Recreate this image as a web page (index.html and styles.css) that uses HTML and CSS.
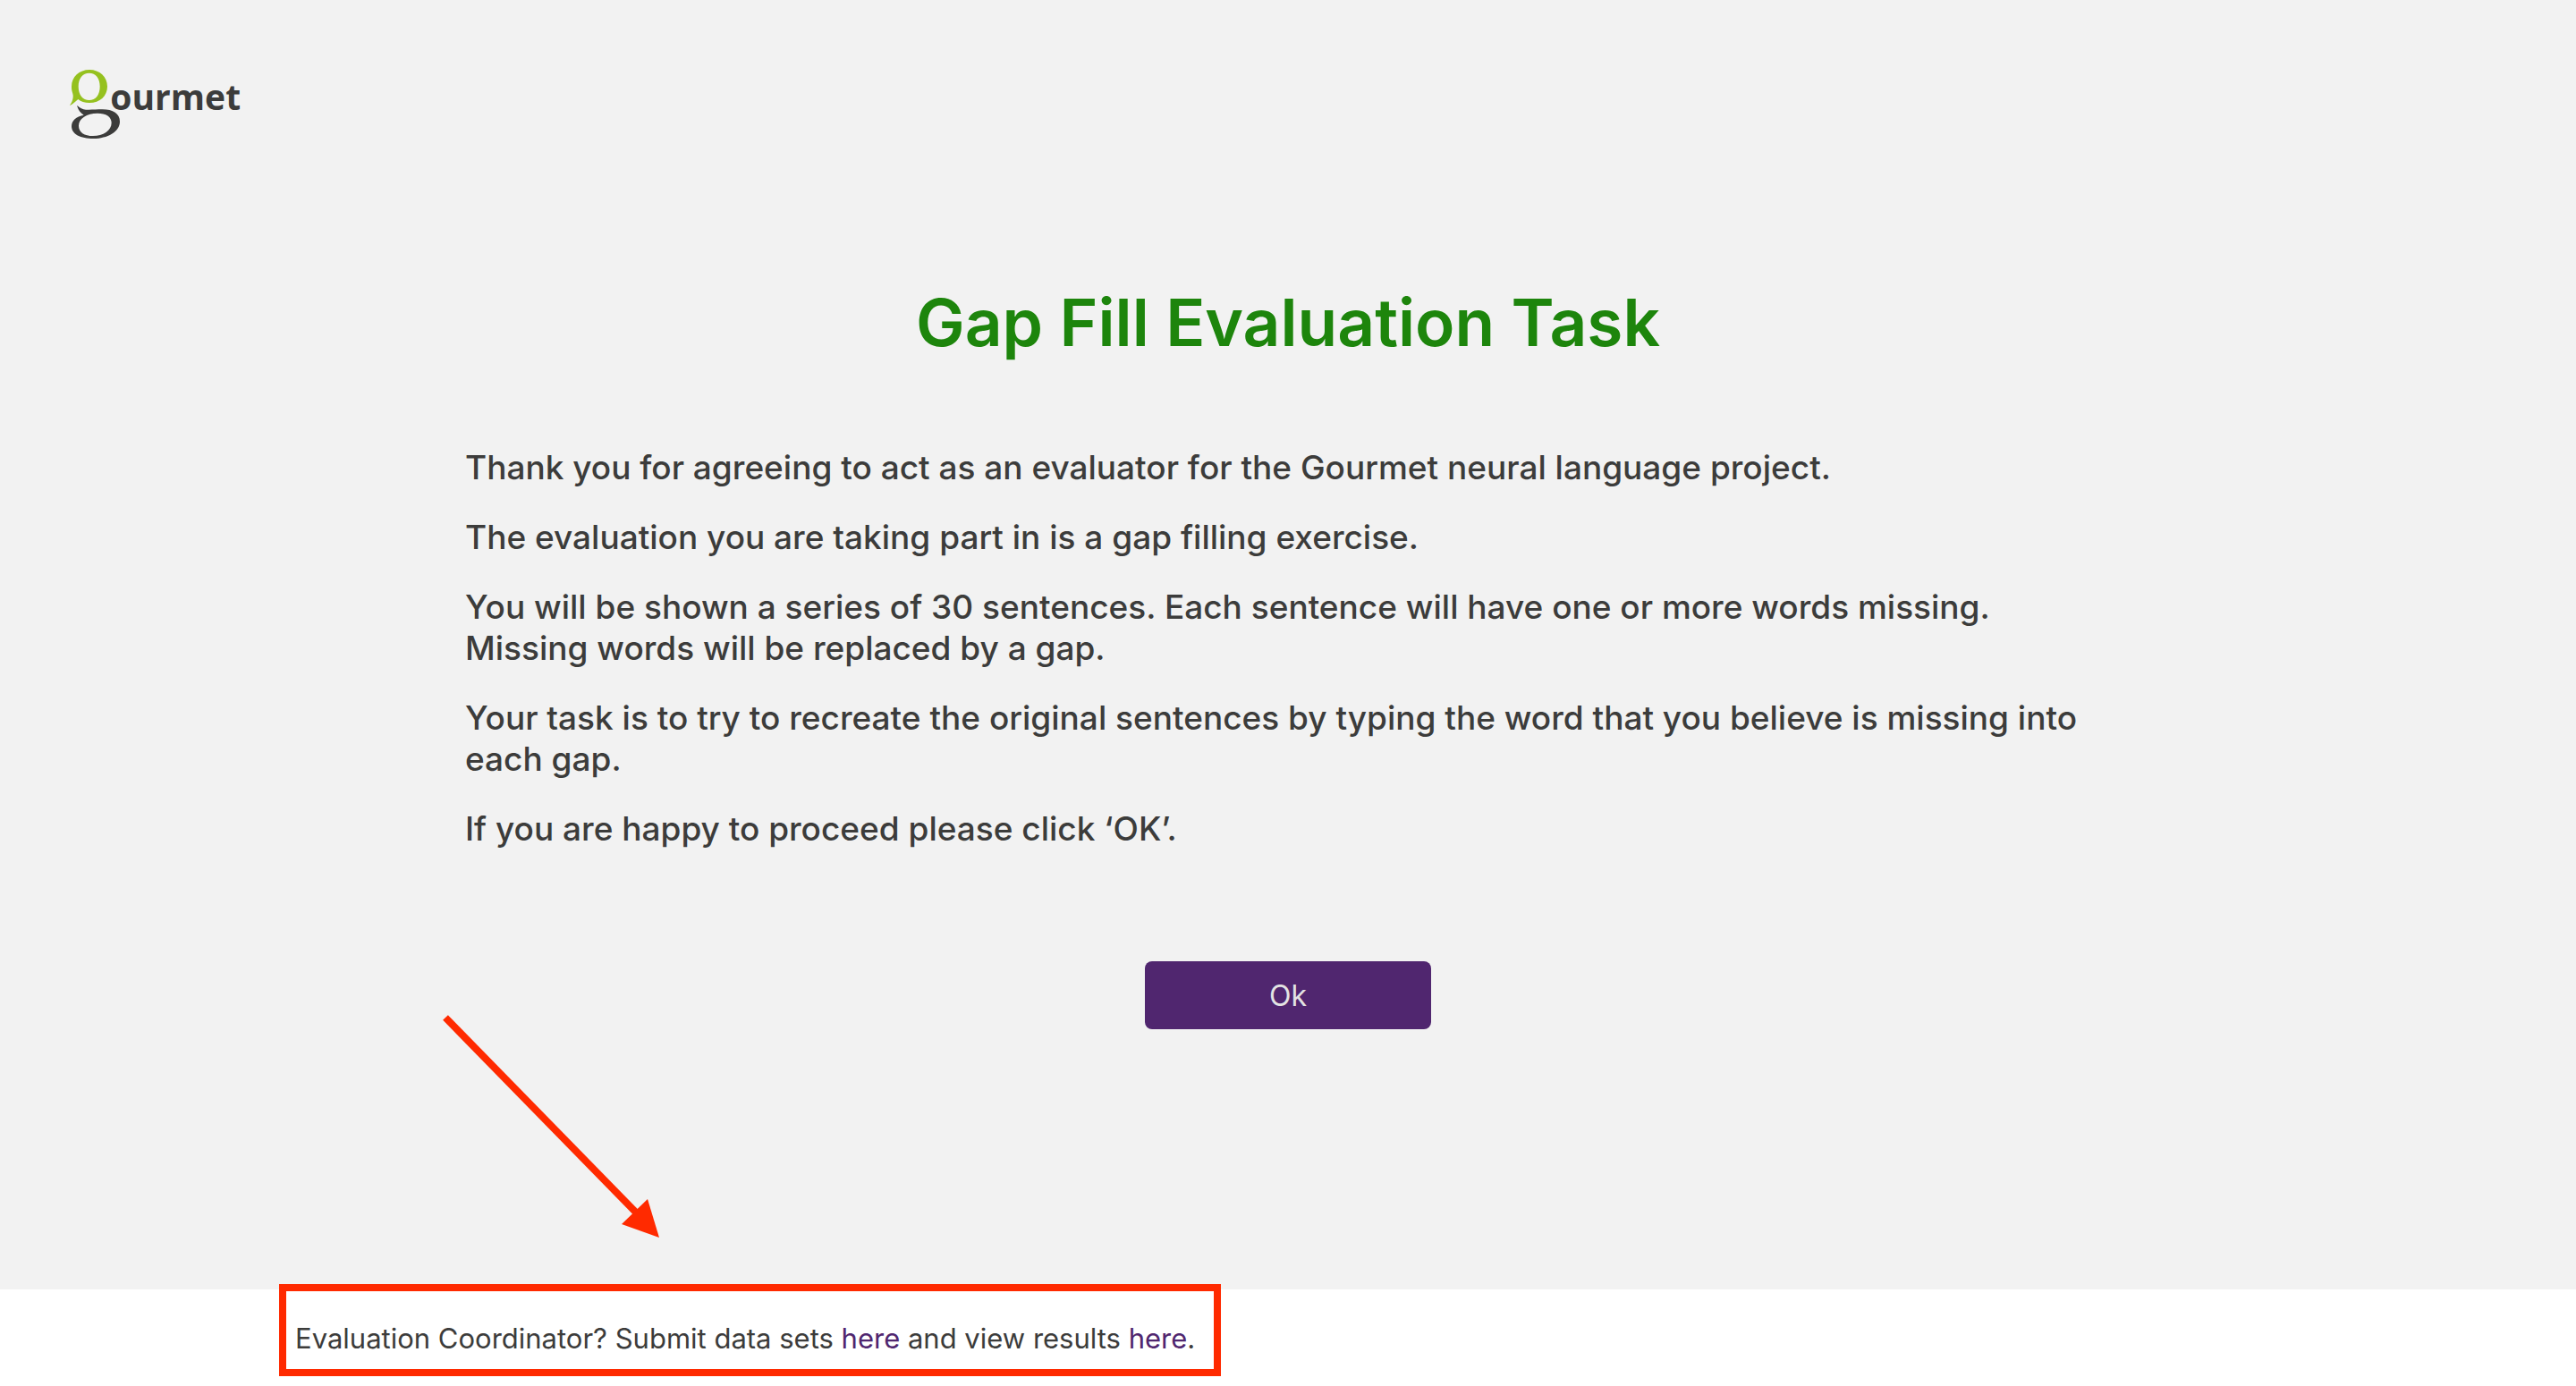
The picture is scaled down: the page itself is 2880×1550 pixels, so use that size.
FILE: index.html
```html
<!DOCTYPE html>
<html lang="en">
<head>
<meta charset="utf-8">
<meta name="viewport" content="width=device-width, initial-scale=1">
<title>Gap Fill Evaluation Task</title>
<link rel="stylesheet" href="styles.css">
</head>
<body>
<div class="page">
  <header class="header">
    <svg class="logo" viewBox="54 54 576 234" role="img" aria-label="gourmet">
      <path class="logo-bubble" fill-rule="evenodd" d="M120 54C154 54 180 78 180 110C180 142 155 165 120 165C104 165 91 161 82 153C74 160 66 168 56 173C54 173 54 172 56 170C61 163 64 155 65 146C66 138 63 132 61 124C60 119 60 115 60 110C60 78 86 54 120 54ZM119 65C98 65 83 82 83 110C83 138 98 156 119 156C141 156 155 138 155 110C155 82 141 65 119 65Z"/>
      <path class="logo-ink" fill-rule="evenodd" d="M80 175C88 183 97 187 108 188C124 189 144 187 163 187C199 187 222 201 222 228C222 262 180 285 134 285C90 285 60 270 60 243C60 225 75 211 101 206C90 199 84 191 79 177C78 174 79 174 80 175ZM147 200C111 200 84 217 84 242C84 264 103 276 132 276C166 276 194 259 194 232C194 212 176 200 147 200Z"/>
      <text class="logo-text" x="190" y="188">ourmet</text>
    </svg>
  </header>
  <main class="main">
    <h1 class="title">Gap Fill Evaluation Task</h1>
    <div class="intro">
      <p>Thank you for agreeing to act as an evaluator for the Gourmet neural language project.</p>
      <p>The evaluation you are taking part in is a gap filling exercise.</p>
      <p>You will be shown a series of 30 sentences. Each sentence will have one or more words missing. Missing words will be replaced by a gap.</p>
      <p>Your task is to try to recreate the original sentences by typing the word that you believe is missing into each gap.</p>
      <p>If you are happy to proceed please click ‘OK’.</p>
    </div>
    <button class="ok" type="button">Ok</button>
  </main>
</div>
<footer class="footer">
  <p class="note">Evaluation Coordinator? Submit data sets <a href="#submit">here</a> and view results <a href="#results">here</a>.</p>
  <svg class="arrow" viewBox="0 0 244 250" aria-hidden="true">
    <path d="M3 3L222 227" stroke="#ff2a00" stroke-width="8"/>
    <path d="M242 249L200 234L229 206Z" fill="#ff2a00"/>
  </svg>
</footer>
</body>
</html>
```
FILE: styles.css
```css
* {
  box-sizing: border-box;
}

body {
  margin: 0;
  background: #ffffff;
  color: #3c3c3b;
  font-family: Inter, "Liberation Sans", sans-serif;
}

.page {
  background: #f2f2f2;
  padding-bottom: 291px;
}

.header {
  padding: 78px 78px 0;
}

.logo {
  display: block;
  width: 192px;
  height: 78px;
  overflow: visible;
}

.logo-bubble {
  fill: #95c11f;
}

.logo-ink,
.logo-text {
  fill: #3c3c3b;
}

.logo-text {
  font-family: "Open Sans", sans-serif;
  font-size: 117px;
  font-weight: 700;
}

.main {
  display: flex;
  flex-direction: column;
  align-items: center;
  max-width: 1840px;
  margin: 0 auto;
}

.title {
  margin: 157px 0 91px;
  color: #1d850c;
  font-size: 73px;
  font-weight: 600;
  line-height: 96px;
}

.intro {
  display: flex;
  flex-direction: column;
  gap: 32px;
  width: 100%;
  font-size: 37px;
  font-weight: 500;
  line-height: 46px;
}

.intro p {
  margin: 0;
}

.ok {
  width: 320px;
  height: 76px;
  margin-top: 125px;
  border: 0;
  border-radius: 8px;
  background: #50266f;
  color: #e3e3e3;
  font-family: inherit;
  font-size: 32px;
}

.footer {
  position: relative;
  z-index: 1;
  padding: 35px 330px 32px;
}

.note {
  position: relative;
  width: fit-content;
  margin: 0;
  font-size: 31px;
  line-height: 40px;
}

.note::before {
  content: "";
  position: absolute;
  inset: -41px -29px -22px -18px;
  z-index: -1;
  border: 8px solid #ff2a00;
  background: #ffffff;
}

.note a {
  color: #50266f;
  text-decoration: none;
}

.arrow {
  position: absolute;
  left: 495px;
  bottom: 100%;
  width: 244px;
  height: 250px;
  margin-bottom: 57px;
}
```
